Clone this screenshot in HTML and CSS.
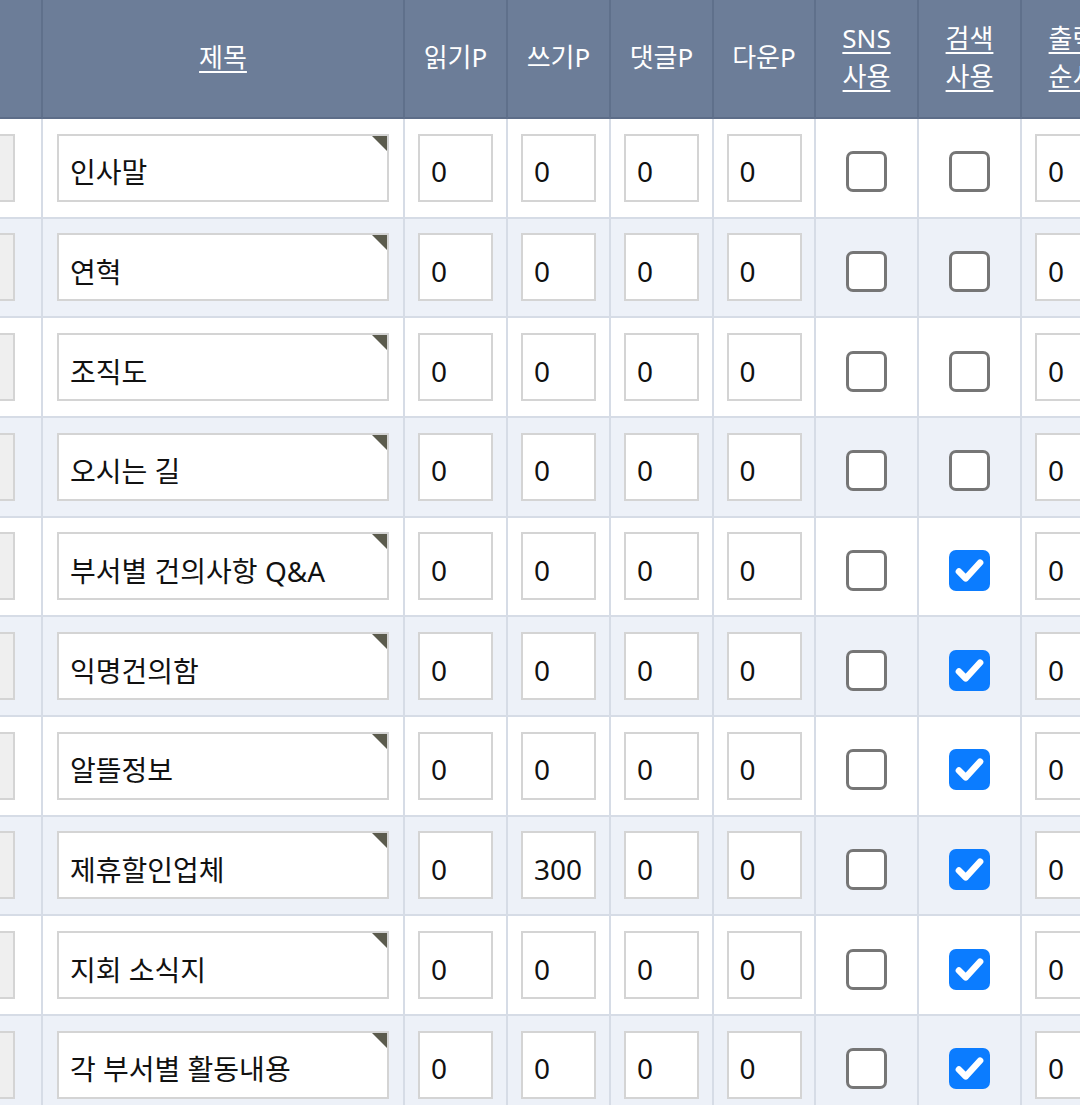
FILE: index.html
```html
<!DOCTYPE html>
<html lang="ko">
<head>
    <meta charset="UTF-8">
    <meta name="viewport" content="width=device-width, initial-scale=1.0">
    <title>게시판 관리</title>
    <link rel="stylesheet" href="styles.css">
</head>
<body>
    <table class="board-table">
        <thead>
            <tr>
                <th class="col-first"></th>
                <th class="col-title"><a href="#">제목</a></th>
                <th class="col-num">읽기P</th>
                <th class="col-num">쓰기P</th>
                <th class="col-num">댓글P</th>
                <th class="col-num narrow">다운P</th>
                <th class="col-num"><a href="#">SNS<br>사용</a></th>
                <th class="col-num"><a href="#">검색<br>사용</a></th>
                <th class="col-num"><a href="#">출력<br>순서</a></th>
            </tr>
        </thead>
        <tbody>
            <tr>
                <td class="cell-first"><input class="field field-first" type="text"></td>
                <td><span class="title-wrap"><input class="field field-title" type="text" value="인사말"></span></td>
                <td><input class="field field-num" type="text" value="0"></td>
                <td><input class="field field-num" type="text" value="0"></td>
                <td><input class="field field-num" type="text" value="0"></td>
                <td><input class="field field-num" type="text" value="0"></td>
                <td><span class="check"></span></td>
                <td><span class="check"></span></td>
                <td class="cell-last"><input class="field field-num" type="text" value="0"></td>
            </tr>
            <tr>
                <td class="cell-first"><input class="field field-first" type="text"></td>
                <td><span class="title-wrap"><input class="field field-title" type="text" value="연혁"></span></td>
                <td><input class="field field-num" type="text" value="0"></td>
                <td><input class="field field-num" type="text" value="0"></td>
                <td><input class="field field-num" type="text" value="0"></td>
                <td><input class="field field-num" type="text" value="0"></td>
                <td><span class="check"></span></td>
                <td><span class="check"></span></td>
                <td class="cell-last"><input class="field field-num" type="text" value="0"></td>
            </tr>
            <tr>
                <td class="cell-first"><input class="field field-first" type="text"></td>
                <td><span class="title-wrap"><input class="field field-title" type="text" value="조직도"></span></td>
                <td><input class="field field-num" type="text" value="0"></td>
                <td><input class="field field-num" type="text" value="0"></td>
                <td><input class="field field-num" type="text" value="0"></td>
                <td><input class="field field-num" type="text" value="0"></td>
                <td><span class="check"></span></td>
                <td><span class="check"></span></td>
                <td class="cell-last"><input class="field field-num" type="text" value="0"></td>
            </tr>
            <tr>
                <td class="cell-first"><input class="field field-first" type="text"></td>
                <td><span class="title-wrap"><input class="field field-title" type="text" value="오시는 길"></span></td>
                <td><input class="field field-num" type="text" value="0"></td>
                <td><input class="field field-num" type="text" value="0"></td>
                <td><input class="field field-num" type="text" value="0"></td>
                <td><input class="field field-num" type="text" value="0"></td>
                <td><span class="check"></span></td>
                <td><span class="check"></span></td>
                <td class="cell-last"><input class="field field-num" type="text" value="0"></td>
            </tr>
            <tr>
                <td class="cell-first"><input class="field field-first" type="text"></td>
                <td><span class="title-wrap"><input class="field field-title" type="text" value="부서별 건의사항 Q&amp;A"></span></td>
                <td><input class="field field-num" type="text" value="0"></td>
                <td><input class="field field-num" type="text" value="0"></td>
                <td><input class="field field-num" type="text" value="0"></td>
                <td><input class="field field-num" type="text" value="0"></td>
                <td><span class="check"></span></td>
                <td><span class="check checked"><svg viewBox="0 0 24 24"><path d="M5.8 12.6l4 4 8.4-9.2"/></svg></span></td>
                <td class="cell-last"><input class="field field-num" type="text" value="0"></td>
            </tr>
            <tr>
                <td class="cell-first"><input class="field field-first" type="text"></td>
                <td><span class="title-wrap"><input class="field field-title" type="text" value="익명건의함"></span></td>
                <td><input class="field field-num" type="text" value="0"></td>
                <td><input class="field field-num" type="text" value="0"></td>
                <td><input class="field field-num" type="text" value="0"></td>
                <td><input class="field field-num" type="text" value="0"></td>
                <td><span class="check"></span></td>
                <td><span class="check checked"><svg viewBox="0 0 24 24"><path d="M5.8 12.6l4 4 8.4-9.2"/></svg></span></td>
                <td class="cell-last"><input class="field field-num" type="text" value="0"></td>
            </tr>
            <tr>
                <td class="cell-first"><input class="field field-first" type="text"></td>
                <td><span class="title-wrap"><input class="field field-title" type="text" value="알뜰정보"></span></td>
                <td><input class="field field-num" type="text" value="0"></td>
                <td><input class="field field-num" type="text" value="0"></td>
                <td><input class="field field-num" type="text" value="0"></td>
                <td><input class="field field-num" type="text" value="0"></td>
                <td><span class="check"></span></td>
                <td><span class="check checked"><svg viewBox="0 0 24 24"><path d="M5.8 12.6l4 4 8.4-9.2"/></svg></span></td>
                <td class="cell-last"><input class="field field-num" type="text" value="0"></td>
            </tr>
            <tr>
                <td class="cell-first"><input class="field field-first" type="text"></td>
                <td><span class="title-wrap"><input class="field field-title" type="text" value="제휴할인업체"></span></td>
                <td><input class="field field-num" type="text" value="0"></td>
                <td><input class="field field-num" type="text" value="300"></td>
                <td><input class="field field-num" type="text" value="0"></td>
                <td><input class="field field-num" type="text" value="0"></td>
                <td><span class="check"></span></td>
                <td><span class="check checked"><svg viewBox="0 0 24 24"><path d="M5.8 12.6l4 4 8.4-9.2"/></svg></span></td>
                <td class="cell-last"><input class="field field-num" type="text" value="0"></td>
            </tr>
            <tr>
                <td class="cell-first"><input class="field field-first" type="text"></td>
                <td><span class="title-wrap"><input class="field field-title" type="text" value="지회 소식지"></span></td>
                <td><input class="field field-num" type="text" value="0"></td>
                <td><input class="field field-num" type="text" value="0"></td>
                <td><input class="field field-num" type="text" value="0"></td>
                <td><input class="field field-num" type="text" value="0"></td>
                <td><span class="check"></span></td>
                <td><span class="check checked"><svg viewBox="0 0 24 24"><path d="M5.8 12.6l4 4 8.4-9.2"/></svg></span></td>
                <td class="cell-last"><input class="field field-num" type="text" value="0"></td>
            </tr>
            <tr>
                <td class="cell-first"><input class="field field-first" type="text"></td>
                <td><span class="title-wrap"><input class="field field-title" type="text" value="각 부서별 활동내용"></span></td>
                <td><input class="field field-num" type="text" value="0"></td>
                <td><input class="field field-num" type="text" value="0"></td>
                <td><input class="field field-num" type="text" value="0"></td>
                <td><input class="field field-num" type="text" value="0"></td>
                <td><span class="check"></span></td>
                <td><span class="check checked"><svg viewBox="0 0 24 24"><path d="M5.8 12.6l4 4 8.4-9.2"/></svg></span></td>
                <td class="cell-last"><input class="field field-num" type="text" value="0"></td>
            </tr>
        </tbody>
    </table>
</body>
</html>
```

FILE: styles.css
```css
html, body {
    margin: 0;
    padding: 0;
    overflow: hidden;
    background: #fff;
}

body {
    font-family: "Noto Sans", "Noto Sans CJK KR", sans-serif;
    color: #111;
}

.board-table {
    table-layout: fixed;
    border-collapse: separate;
    border-spacing: 0;
    margin-left: -60px;
    width: 1183px;
}

.board-table th,
.board-table td {
    box-sizing: border-box;
    padding: 0;
    text-align: center;
    vertical-align: middle;
}

.board-table th {
    height: 119px;
    padding-bottom: 4px;
    background-color: #6c7d98;
    color: #fff;
    font-size: 26px;
    font-weight: 400;
    line-height: 38px;
    border-right: 2px solid #5f708b;
    border-bottom: 2px solid #5d6d88;
}

.board-table th a {
    color: #fff;
    text-decoration: underline;
    text-underline-offset: 4px;
    text-decoration-thickness: 2px;
}

.col-first {
    width: 103px;
}

.col-title {
    width: 362px;
}

.col-num {
    width: 103px;
}

.col-num.narrow {
    width: 102px;
}

.board-table td {
    height: 99.67px;
    border-right: 2px solid #d6dce6;
    border-bottom: 2px solid #d6dce6;
    background-color: #fff;
}

.board-table tbody tr:nth-child(even) td {
    background-color: #edf1f8;
}

.cell-first {
    text-align: right !important;
    padding-right: 32px !important;
}

.field {
    box-sizing: border-box;
    height: 68px;
    border: 2px solid #d4d4d4;
    border-radius: 0;
    background: #fff;
    font-family: "Noto Sans", "Noto Sans CJK KR", sans-serif;
    font-size: 28px;
    color: #111;
    padding: 7px 11px 0;
    margin: 0;
    outline: none;
    vertical-align: middle;
}

.field-first {
    width: 75px;
    background: #efefef;
}

.field-title {
    width: 332px;
}

.field-num {
    width: 75px;
}

.title-wrap {
    position: relative;
    display: inline-block;
    vertical-align: middle;
}

.title-wrap::after {
    content: "";
    position: absolute;
    top: 2px;
    right: 2px;
    width: 0;
    height: 0;
    border-top: 15px solid #5b5b4d;
    border-left: 15px solid transparent;
}

.check {
    box-sizing: border-box;
    display: block;
    width: 41px;
    height: 41px;
    margin: 8px auto 0;
    border: 3px solid #767676;
    border-radius: 7px;
    background: #fff;
}

.check.checked {
    border: none;
    background: #0b7cff;
}

.check svg {
    display: block;
    width: 41px;
    height: 41px;
}

.check svg path {
    fill: none;
    stroke: #fff;
    stroke-width: 3.8;
    stroke-linecap: round;
    stroke-linejoin: round;
}
```
